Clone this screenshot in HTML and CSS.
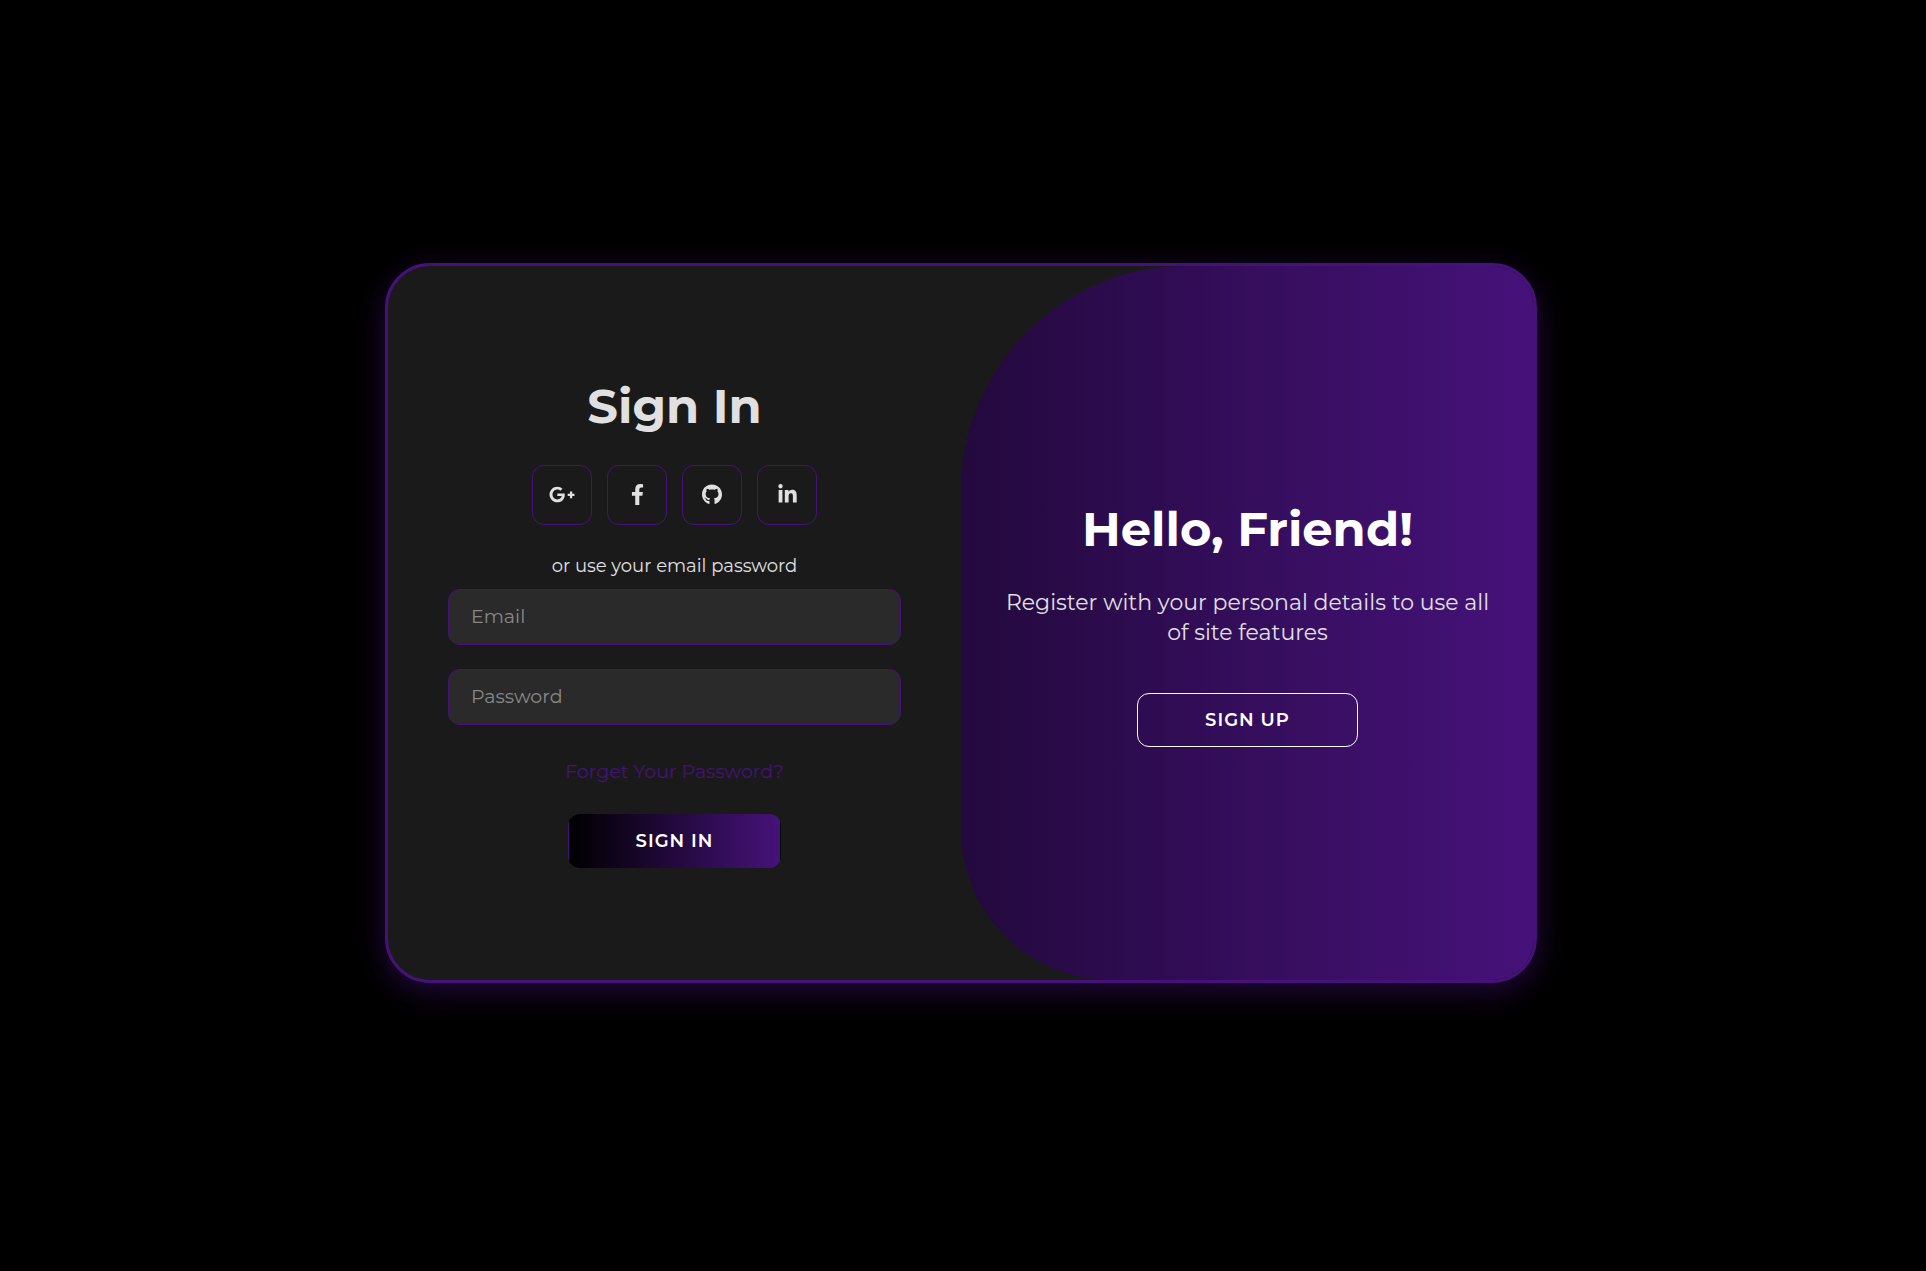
FILE: index.html
```html
<!DOCTYPE html>
<html lang="en">
<head>
<meta charset="utf-8">
<meta name="viewport" content="width=device-width, initial-scale=1">
<title>Sign In</title>
<link rel="stylesheet" href="styles.css">
</head>
<body>
<main class="card">
  <form class="sign-in">
    <h1 class="title">Sign In</h1>
    <div class="social">
      <a class="social-link" href="#" aria-label="Google Plus"><svg class="icon" width="26" viewBox="0 0 640 512"><path d="M386.061 228.496c1.834 9.692 3.143 19.384 3.143 31.956C389.204 370.205 315.599 448 204.8 448c-106.084 0-192-85.915-192-192s85.916-192 192-192c51.864 0 95.083 18.859 128.611 50.292l-52.126 50.03c-14.145-13.621-39.028-29.599-76.485-29.599-65.484 0-118.92 54.221-118.92 121.277 0 67.056 53.436 121.277 118.92 121.277 75.961 0 104.513-54.745 108.965-82.773H204.8v-66.009h181.261zm185.406 6.437V179.2h-56.001v55.733h-55.733v56.001h55.733v55.733h56.001v-55.733H627.2v-56.001h-55.733z"/></svg></a>
      <a class="social-link" href="#" aria-label="Facebook"><svg class="icon" width="13" viewBox="0 0 320 512"><path d="M279.14 288l14.22-92.66h-88.91v-60.13c0-25.35 12.42-50.06 52.24-50.06h40.42V6.26S260.43 0 225.36 0c-73.22 0-121.08 44.38-121.08 124.72v70.62H22.89V288h81.39v224h100.17V288z"/></svg></a>
      <a class="social-link" href="#" aria-label="GitHub"><svg class="icon" width="20" viewBox="0 0 496 512"><path d="M165.9 397.4c0 2-2.3 3.6-5.2 3.6-3.3.3-5.6-1.3-5.6-3.6 0-2 2.3-3.6 5.2-3.6 3-.3 5.6 1.3 5.6 3.6zm-31.1-4.5c-.7 2 1.3 4.3 4.3 4.9 2.6 1 5.6 0 6.2-2s-1.3-4.3-4.3-5.2c-2.6-.7-5.5.3-6.2 2.3zm44.2-1.7c-2.9.7-4.9 2.6-4.6 4.9.3 2 2.9 3.3 5.9 2.6 2.9-.7 4.9-2.6 4.6-4.6-.3-1.9-3-3.2-5.9-2.9zM244.8 8C106.1 8 0 113.3 0 252c0 110.9 69.8 205.8 169.5 239.2 12.8 2.3 17.3-5.6 17.3-12.1 0-6.2-.3-40.4-.3-61.4 0 0-70 15-84.7-29.8 0 0-11.4-29.1-27.8-36.6 0 0-22.9-15.7 1.6-15.4 0 0 24.9 2 38.6 25.8 21.9 38.6 58.6 27.5 72.9 20.9 2.3-16 8.8-27.1 16-33.7-55.9-6.2-112.3-14.3-112.3-110.5 0-27.5 7.6-41.3 23.6-58.9-2.6-6.5-11.1-33.3 2.6-67.9 20.9-6.5 69 27 69 27 20-5.6 41.5-8.5 62.8-8.5s42.8 2.9 62.8 8.5c0 0 48.1-33.6 69-27 13.7 34.7 5.2 61.4 2.6 67.9 16 17.7 25.8 31.5 25.8 58.9 0 96.5-58.9 104.2-114.8 110.5 9.2 7.9 17 22.9 17 46.4 0 33.7-.3 75.4-.3 83.6 0 6.5 4.6 14.4 17.3 12.1C428.2 457.8 496 362.9 496 252 496 113.3 383.5 8 244.8 8z"/></svg></a>
      <a class="social-link" href="#" aria-label="LinkedIn"><svg class="icon" width="19" viewBox="0 0 448 512"><path d="M100.28 448H7.4V148.9h92.88zM53.79 108.1C24.09 108.1 0 83.5 0 53.8a53.79 53.79 0 0 1 107.58 0c0 29.7-24.1 54.3-53.79 54.3zM447.9 448h-92.68V302.4c0-34.7-.7-79.2-48.29-79.2-48.29 0-55.69 37.7-55.69 76.7V448h-92.78V148.9h89.08v40.8h1.3c12.4-23.5 42.69-48.3 87.88-48.3 94 0 111.28 61.9 111.28 142.3V448z"/></svg></a>
    </div>
    <p class="hint">or use your email password</p>
    <input class="field" type="email" placeholder="Email" aria-label="Email">
    <input class="field" type="password" placeholder="Password" aria-label="Password">
    <a class="forgot" href="#">Forget Your Password?</a>
    <button class="button button-primary" type="button">SIGN IN</button>
  </form>
  <section class="welcome">
    <h1 class="title">Hello, Friend!</h1>
    <p class="lead">Register with your personal details to use all of site features</p>
    <button class="button button-outline" type="button">SIGN UP</button>
  </section>
</main>
</body>
</html>
```
FILE: styles.css
```css
:root {
  --purple: #46127a;
  --surface: #1a1a1a;
  --text: #e0e0e0;
}

* {
  box-sizing: border-box;
  margin: 0;
  padding: 0;
}

body {
  display: flex;
  align-items: center;
  justify-content: center;
  min-height: 100vh;
  padding: 24px 28px 49px 24px;
  background: #000;
  color: var(--text);
  font-family: Montserrat, Inter, sans-serif;
}

.card {
  display: grid;
  grid-template-columns: 1fr 1fr;
  width: 100%;
  max-width: 1152px;
  min-height: 720px;
  overflow: hidden;
  border: 3px solid var(--purple);
  border-radius: 45px;
  background: var(--surface);
  box-shadow: 0 8px 30px rgba(70, 18, 122, 0.5);
}

.sign-in,
.welcome {
  display: flex;
  flex-direction: column;
  align-items: center;
  justify-content: center;
}

.sign-in {
  padding: 0 60px 2px;
}

.title {
  font-size: 48px;
  font-weight: 700;
  line-height: 58px;
}

.social {
  display: flex;
  gap: 15px;
  margin: 30px 0;
}

.social-link {
  display: flex;
  align-items: center;
  justify-content: center;
  width: 60px;
  height: 60px;
  border: 1px solid var(--purple);
  border-radius: 12px;
  color: var(--text);
}

.icon {
  height: 21px;
  fill: currentColor;
}

.hint {
  margin-bottom: 12px;
  font-size: 18px;
  line-height: 22px;
}

.field {
  width: 100%;
  height: 56px;
  margin-bottom: 24px;
  padding: 0 22px;
  border: 1px solid var(--purple);
  border-radius: 12px;
  outline: none;
  background: #2a2a2a;
  color: var(--text);
  font: inherit;
  font-size: 19px;
}

.field::placeholder {
  color: #888;
}

.forgot {
  margin: 11px 0 30px;
  color: var(--purple);
  font-size: 19px;
  line-height: 24px;
  text-decoration: none;
}

.button {
  height: 54px;
  padding: 0 67px;
  border: 1px solid transparent;
  border-radius: 12px;
  color: #fff;
  font: inherit;
  font-size: 18px;
  font-weight: 600;
  letter-spacing: 1px;
}

.button-primary {
  background: linear-gradient(to right, #000, var(--purple));
}

.button-outline {
  border-color: #fff;
  background: transparent;
}

.welcome {
  padding: 0 44px;
  border-radius: 225px 0 0 150px;
  background: linear-gradient(to right, #23093d, var(--purple));
  text-align: center;
}

.welcome .title {
  color: #fff;
}

.lead {
  margin: 30px 0 45px;
  font-size: 22px;
  line-height: 30px;
}
```
